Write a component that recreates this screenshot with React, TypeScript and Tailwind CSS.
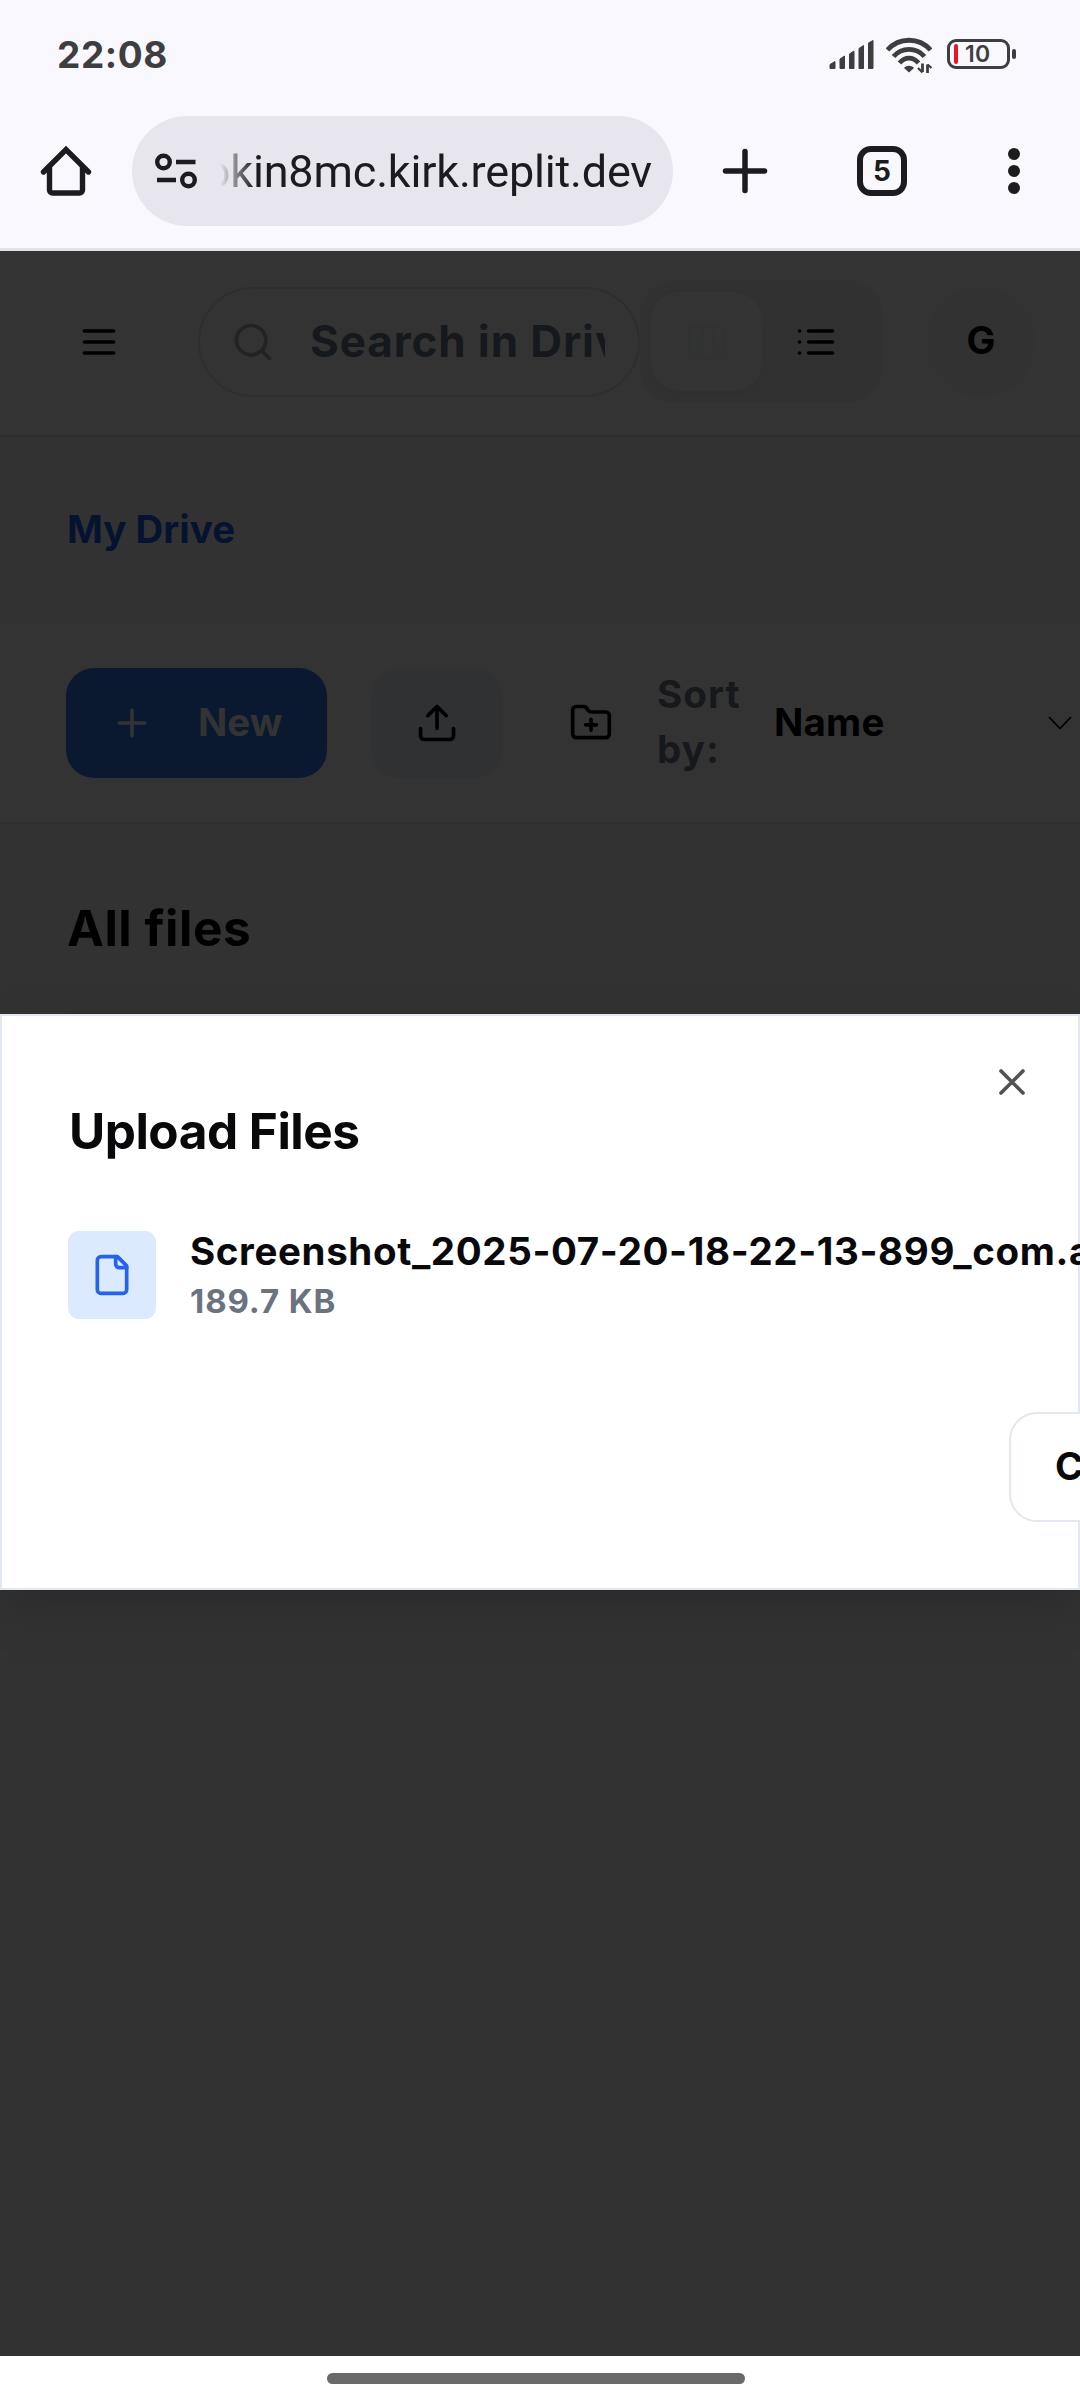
import { ReactNode } from "react";

type IconProps = { className: string; children: ReactNode };

// 24-unit stroke icon, 44px on screen
function Icon({ className, children }: IconProps) {
  return (
    <svg
      viewBox="0 0 24 24"
      className={"h-11 w-11 shrink-0 " + className}
      fill="none"
      stroke="currentColor"
      strokeWidth="2"
      strokeLinecap="round"
      strokeLinejoin="round"
    >
      {children}
    </svg>
  );
}

function StatusBar() {
  return (
    <div className="flex h-[108px] items-center pl-[57px] pr-16 text-[#3e3e40]">
      <span className="text-[37px] font-bold leading-none tracking-[0.6px]">22:08</span>
      <svg className="ml-auto h-10 w-[46px]" viewBox="0 0 46 40" fill="currentColor">
        <path d="M1 34.500V30.500L6 27.500V34.500Z" stroke="currentColor" strokeLinejoin="round" />
        <path d="M11 34.500V25L15.500 22V34.500Z" stroke="currentColor" strokeLinejoin="round" />
        <path d="M20.500 34.500V20L25 17V34.500Z" stroke="currentColor" strokeLinejoin="round" />
        <path d="M30 34.500V14.500L34.500 11.500V34.500Z" stroke="currentColor" strokeLinejoin="round" />
        <path d="M39.500 34.500V9L44 6.500V34.500Z" stroke="currentColor" strokeLinejoin="round" />
      </svg>
      <svg className="ml-[11px] h-10 w-[46px]" viewBox="0 0 46 40" fill="none" stroke="currentColor" strokeWidth="4.800">
        <path d="M1.500 16C13 3 33 3 44.500 16" />
        <path d="M7.500 22.500C16 13 30 13 38.500 22.500" />
        <path d="M13.500 29C19 22.500 27 22.500 32.500 29" />
        <path d="M18 34C20.500 31 25.500 31 28 34L23 38.500Z" fill="currentColor" stroke="none" />
        <path d="M36.500 29.500V38M41.500 39V30.500" strokeWidth="2.800" />
        <path d="M32 34L36.500 38.500M41.500 30.500L45.500 34" strokeWidth="2.200" />
      </svg>
      <div className="ml-[15px] flex h-[30px] w-[63px] items-center rounded-[9px] border-3 border-current pl-[4px]">
        <span className="h-5 w-1 rounded-sm bg-[#e5191c]" />
        <span className="ml-[7px] text-[23px] font-semibold leading-none tracking-[0.3px]">10</span>
      </div>
      <span className="ml-0.5 h-2.5 w-1 rounded-full bg-current" />
    </div>
  );
}

function BrowserBar() {
  return (
    <div className="flex h-[143px] items-start border-b-3 border-[#e1e1e8] pt-2 text-[#1b1b20]">
      <svg className="ml-[39px] mt-[28px] h-[54px] w-[54px]" viewBox="0 0 54 54" fill="none" stroke="currentColor" strokeWidth="5.400" strokeLinejoin="round" strokeLinecap="round">
        <path d="M4.500 28L27 5.500L49.500 28" strokeLinejoin="miter" />
        <path d="M10.500 23V46a3 3 0 0 0 3 3H40.500a3 3 0 0 0 3-3V23" />
      </svg>
      <div className="ml-[39px] flex h-[110px] w-[541px] items-center rounded-full bg-[#e7e6ee] pl-[22px]">
        <svg className="h-[38px] w-[46px]" viewBox="0 0 46 38" fill="none" stroke="currentColor" strokeWidth="4.400">
          <circle cx="9.500" cy="10" r="6.300" />
          <path d="M22 10H41.500M3 28H22" />
          <circle cx="34.500" cy="28" r="6.300" />
        </svg>
        <div className="ml-5 flex w-[432px] justify-end overflow-hidden pt-0.5 [mask-image:linear-gradient(to_right,transparent,black_34px)]">
          <span className="whitespace-nowrap font-[Roboto] text-[45px] leading-[60px] tracking-[-0.18px]">okin8mc.kirk.replit.dev</span>
        </div>
      </div>
      <svg className="ml-[47px] mt-[30px] h-[50px] w-[50px]" viewBox="0 0 50 50" stroke="currentColor" strokeWidth="5.500" strokeLinecap="round">
        <path d="M25 5.500V44.500M5.500 25H44.500" />
      </svg>
      <div className="ml-[87px] mt-[30px] flex h-[50px] w-[50px] items-center justify-center rounded-[14px] border-[6px] border-current text-[28px] font-bold leading-none">5</div>
      <div className="ml-[101px] mt-[32px] flex h-[46px] w-3 flex-col justify-between">
        <span className="h-3 w-3 rounded-full bg-current" />
        <span className="h-3 w-3 rounded-full bg-current" />
        <span className="h-3 w-3 rounded-full bg-current" />
      </div>
    </div>
  );
}

function DriveHeader() {
  return (
    <header className="flex h-[186px] items-center border-b-2 border-[#2e2e2f] bg-[#333333] pb-[3px]">
      <Icon className="ml-[77px] text-black">
        <path d="M4 6h16M4 12h16M4 18h16" />
      </Icon>
      <div className="ml-[77px] flex h-[110px] w-[442px] items-center rounded-full border-2 border-[#2d2e2f] pl-[31px]">
        <Icon className="text-[#222324]">
          <circle cx="11" cy="11" r="8" />
          <path d="m21 21-4.300-4.300" />
        </Icon>
        <div className="ml-[35px] w-[295px] overflow-hidden whitespace-nowrap pb-px text-[44px] font-bold leading-[60px] tracking-[0.9px] text-[#15181d]">
          Search in Driv
        </div>
      </div>
      <div className="flex h-[121px] w-[242px] items-center rounded-[33px] bg-[#313131] pl-[11px]">
        <div className="flex h-[99px] w-[111px] items-center justify-center rounded-[28px] bg-[#333333] text-[#313232] shadow-[0_2px_4px_#303030]">
          <Icon className="">
            <rect x="3" y="3" width="18" height="18" rx="1" />
            <path d="M3 9h18M3 15h18M9 3v18M15 3v18" strokeWidth="1" />
          </Icon>
        </div>
        <Icon className="ml-8 text-black">
          <path d="M8 6h13M8 12h13M8 18h13M3 6h.01M3 12h.01M3 18h.01" />
        </Icon>
      </div>
      <div className="ml-[45px] flex h-[110px] w-[108px] items-center justify-center rounded-full bg-[#323232] pb-0.5 text-[38.5px] font-bold text-black">
        G
      </div>
    </header>
  );
}

function Toolbar() {
  return (
    <div className="flex h-[201px] items-center border-b-2 border-[#2e2e2f] bg-[#333333] text-[38.5px] font-bold leading-[55px] text-black">
      <div className="ml-[66px] flex h-[110px] w-[261px] items-center rounded-[28px] bg-[#0a1930] pl-11 text-[#333333]">
        <Icon className="">
          <path d="M5 12h14M12 5v14" />
        </Icon>
        <span className="ml-11">New</span>
      </div>
      <div className="ml-11 flex h-[110px] w-[132px] items-center justify-center rounded-[28px] bg-[#303133]">
        <Icon className="">
          <path d="M21 15v4a2 2 0 0 1-2 2H5a2 2 0 0 1-2-2v-4M17 8l-5-5-5 5M12 3v12" />
        </Icon>
      </div>
      <Icon className="ml-[66px]">
        <path d="M12 10v6M9 13h6M20 20a2 2 0 0 0 2-2V8a2 2 0 0 0-2-2h-7.900a2 2 0 0 1-1.690-.9L9.600 3.900A2 2 0 0 0 7.930 3H4a2 2 0 0 0-2 2v13a2 2 0 0 0 2 2Z" />
      </Icon>
      <span className="-mt-0.5 ml-11 w-[117px] tracking-[1.1px] text-[#16181c]">
        Sort
        <br />
        by:
      </span>
      <span className="tracking-[0.2px]">Name</span>
      <svg className="ml-auto mr-[7px] h-4 w-[26px]" viewBox="0 0 26 16" fill="none" stroke="currentColor" strokeWidth="1.800">
        <path d="M2 2L13 13.500L24 2" />
      </svg>
    </div>
  );
}

function UploadDialog() {
  return (
    <section className="relative h-[576px] border-2 border-[#e2e8f0] bg-white text-[#09090b] shadow-[0_20px_40px_-8px_#2a2a2a]">
      <Icon className="absolute right-[44px] top-[44px] text-[#525253]">
        <path d="M18 6 6 18M6 6l12 12" />
      </Icon>
      <h2 className="ml-[67px] pt-[82px] text-[49.5px] font-bold leading-[66px] tracking-[-0.5px]">Upload Files</h2>
      <div className="ml-[66px] mt-[60px] flex w-[1400px] items-start">
        <div className="mt-[7px] flex h-[88px] w-[88px] items-center justify-center rounded-[11px] bg-[#dbeafe] text-[#2563eb]">
          <Icon className="">
            <path d="M15 2H6a2 2 0 0 0-2 2v16a2 2 0 0 0 2 2h12a2 2 0 0 0 2-2V7Z" />
            <path d="M14 2v4a2 2 0 0 0 2 2h4" />
          </Icon>
        </div>
        <div className="ml-[34px] whitespace-nowrap">
          <p className="text-[38.5px] font-bold leading-[55px] tracking-[0.62px]">Screenshot_2025-07-20-18-22-13-899_com.android.chrome.jpg</p>
          <p className="text-[33px] font-bold leading-[44px] tracking-[0.9px] text-[#6b7280]">189.7 KB</p>
        </div>
      </div>
      <div className="ml-[1007px] mt-[89px] flex h-[110px] w-[220px] items-center rounded-[28px] border-2 border-[#e2e8f0] bg-white pl-[44px] text-[38.5px] font-bold">
        Cancel
      </div>
    </section>
  );
}

export default function App() {
  return (
    <div className="flex h-[2400px] w-[1080px] flex-col overflow-hidden bg-[#f9f8ff] font-[Inter,sans-serif]">
      <StatusBar />
      <BrowserBar />
      <main className="flex h-[2105px] flex-col bg-[#323232]">
        <DriveHeader />
        <nav className="flex h-[186px] items-center pl-[67px] text-[38.5px] font-bold text-[#051230]">My Drive</nav>
        <Toolbar />
        <h1 className="ml-[67px] mt-[71px] h-[66px] text-[49.5px] font-bold leading-[66px] tracking-[0.5px] text-black">All files</h1>
        <div className="ml-[66px] mt-[51px] h-[2px] w-[453px] rounded-t-[28px] bg-[#2e2e2e]" />
        <UploadDialog />
      </main>
      <footer className="flex h-11 justify-center bg-white pr-2 pt-[17px]">
        <div className="h-[11px] w-[418px] rounded-full bg-[#696969]" />
      </footer>
    </div>
  );
}
